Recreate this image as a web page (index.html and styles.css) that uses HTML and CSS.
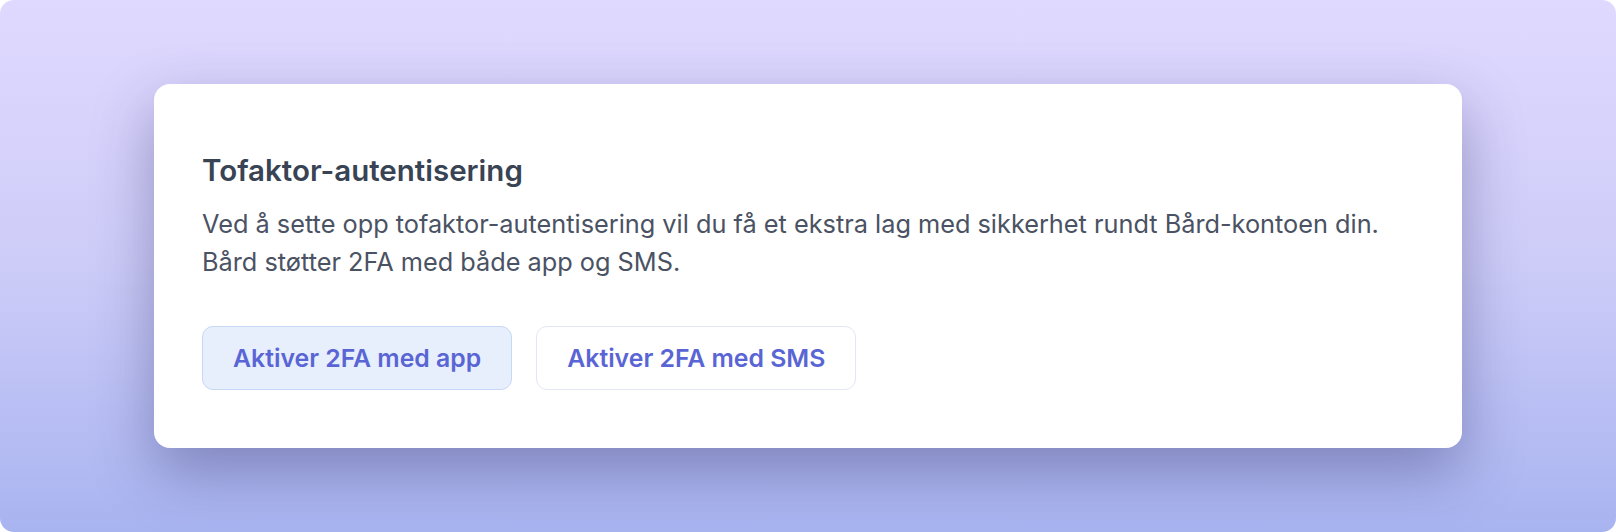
FILE: index.html
```html
<!DOCTYPE html>
<html lang="nb">
<head>
  <meta charset="UTF-8" />
  <meta name="viewport" content="width=device-width, initial-scale=1.0"/>
  <title>Tofaktor-autentisering</title>
  <link rel="stylesheet" href="styles.css">
</head>
<body>
  <main class="backdrop">
    <section class="card">
      <h2 class="card-title">Tofaktor-autentisering</h2>
      <p class="card-text">
        Ved å sette opp tofaktor-autentisering vil du få et ekstra lag med sikkerhet rundt Bård-kontoen din.<br>
        Bård støtter 2FA med både app og SMS.
      </p>

      <div class="actions">
        <button class="btn btn-primary">Aktiver 2FA med app</button>
        <button class="btn btn-outline">Aktiver 2FA med SMS</button>
      </div>
    </section>
  </main>
</body>
</html>
```

FILE: styles.css
```css
* {
  margin: 0;
  padding: 0;
  box-sizing: border-box;
}
body {
  font-family: Inter, "Noto Sans", Arial, sans-serif;
  background-color: #fff;
}

/* Fundo com gradiente lilás */
.backdrop {
  height: 532px;
  border-radius: 14px;
  background: linear-gradient(180deg, #e0d9ff 0%, #cdccf8 50%, #a8b4f0 100%);
  display: flex;
  align-items: center;
  justify-content: center;
}

/* Cartão branco */
.card {
  width: 1308px;
  background: #fff;
  border-radius: 16px;
  padding: 68px 48px 58px;
  box-shadow: 0 24px 60px rgba(40, 40, 100, 0.38);
}

.card-title {
  font-size: 29.5px;
  line-height: 36px;
  font-weight: 600;
  color: #384354;
}

.card-text {
  margin-top: 17px;
  font-size: 25.3px;
  line-height: 38px;
  color: #4a5263;
}

.actions {
  display: flex;
  gap: 24px;
  margin-top: 45px;
}

.btn {
  height: 64px;
  padding: 0 30px;
  border-radius: 11px;
  font-family: inherit;
  font-size: 24.8px;
  font-weight: 600;
  color: #5a65d5;
  cursor: pointer;
}
.btn-primary {
  background-color: #e7effd;
  border: 1.5px solid #c7d8f6;
}
.btn-outline {
  background-color: #fff;
  border: 1.5px solid #e3e7f3;
}
```
